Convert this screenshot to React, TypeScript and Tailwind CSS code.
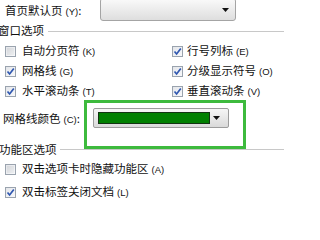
import React from "react";

const font = { fontFamily: '"Noto Sans CJK SC", "Noto Sans", sans-serif' };

function Mn({ k }: { k: string }) {
  return (
    <span className="ml-[3px] text-[9.5px] text-[#111]" style={{ fontFamily: '"Liberation Sans", Arial, sans-serif' }}>
      ({k})
    </span>
  );
}

function Box({ checked }: { checked: boolean }) {
  return (
    <span className="flex h-[11px] w-[11px] shrink-0 items-center justify-center border border-[#9aa3ae] bg-gradient-to-br from-[#e4e6ea] to-[#f8f9fb]">
      {checked ? (
        <svg width="9" height="9" viewBox="0 0 9 9">
          <path d="M1.5 4.5 L3.6 7 L7.8 1.5" fill="none" stroke="#2f57b0" strokeWidth="1.7" />
        </svg>
      ) : (
        <span className="h-[7px] w-[7px] bg-gradient-to-br from-[#d6d8dc] to-[#eceef0]" />
      )}
    </span>
  );
}

function Check({ checked, label, k, gap = "gap-[6px]" }: { checked: boolean; label: string; k: string; gap?: string }) {
  return (
    <div className={`flex h-[20px] items-center ${gap}`}>
      <Box checked={checked} />
      <span className="whitespace-nowrap text-[11.5px] leading-none text-[#111]">
        {label}
        <Mn k={k} />
      </span>
    </div>
  );
}

function Arrow() {
  return (
    <svg width="7" height="4" viewBox="0 0 7 4">
      <path d="M0 0 H7 L3.5 4 Z" fill="#111" />
    </svg>
  );
}

export default function App() {
  return (
    <div className="relative h-[213px] w-[284px] overflow-hidden bg-white" style={font}>
      {/* row 1 */}
      <div className="flex h-[21px] items-center">
        <span className="ml-[5px] w-[95px] whitespace-nowrap text-[11.5px] leading-none text-[#111]">
          首页默认页<Mn k="Y" />:
        </span>
        <div className="-mt-[2px] flex h-[23px] w-[136px] items-center justify-end rounded-[3px] border border-[#a4a4a4] bg-gradient-to-b from-[#fafafa] to-[#dedede] pr-[6px]">
          <Arrow />
        </div>
      </div>
      {/* header 1 */}
      <div className="flex h-[20px] items-center">
        <span className="-ml-[2px] whitespace-nowrap text-[11.5px] leading-none text-[#111]">窗口选项</span>
        <div className="ml-[4px] h-px flex-1 bg-[#c8c8c8]" />
      </div>
      {/* checkbox grid */}
      <div className="grid grid-cols-[167px_1fr] pl-[5px]">
        <Check checked={false} label="自动分页符" k="K" />
        <Check checked label="行号列标" k="E" gap="gap-[4px]" />
        <Check checked label="网格线" k="G" />
        <Check checked label="分级显示符号" k="O" gap="gap-[4px]" />
        <Check checked label="水平滚动条" k="T" />
        <Check checked label="垂直滚动条" k="V" gap="gap-[4px]" />
      </div>
      {/* color row */}
      <div className="flex h-[39px] items-start pt-[7px]">
        <span className="ml-[3px] w-[90px] whitespace-nowrap text-[11.5px] leading-[20px] text-[#111]">
          网格线颜色<Mn k="C" />:
        </span>
        <div className="flex h-[20px] w-[136px] items-center rounded-[2px] border border-[#9c9c9c] bg-gradient-to-b from-[#f6f6f6] to-[#dadada] pl-[4px] pr-[5px]">
          <div className="h-[12px] w-[112px] border border-[#123312] bg-[#008000]" />
          <div className="flex flex-1 justify-center">
            <Arrow />
          </div>
        </div>
      </div>
      {/* header 2 */}
      <div className="flex h-[19px] items-center">
        <span className="-ml-[1px] whitespace-nowrap text-[11.5px] leading-none text-[#111]">功能区选项</span>
        <div className="ml-[3px] h-px flex-1 bg-[#c8c8c8]" />
      </div>
      <div className="pl-[5px]">
        <div className="h-[18px]">
          <Check checked={false} label="双击选项卡时隐藏功能区" k="A" />
        </div>
        <div className="mt-[5px]">
          <Check checked label="双击标签关闭文档" k="L" />
        </div>
      </div>
      {/* highlight overlay */}
      <div className="pointer-events-none absolute left-[84px] top-[100px] h-[49px] w-[162px] border-[3px] border-[#3dba3d]" />
    </div>
  );
}
